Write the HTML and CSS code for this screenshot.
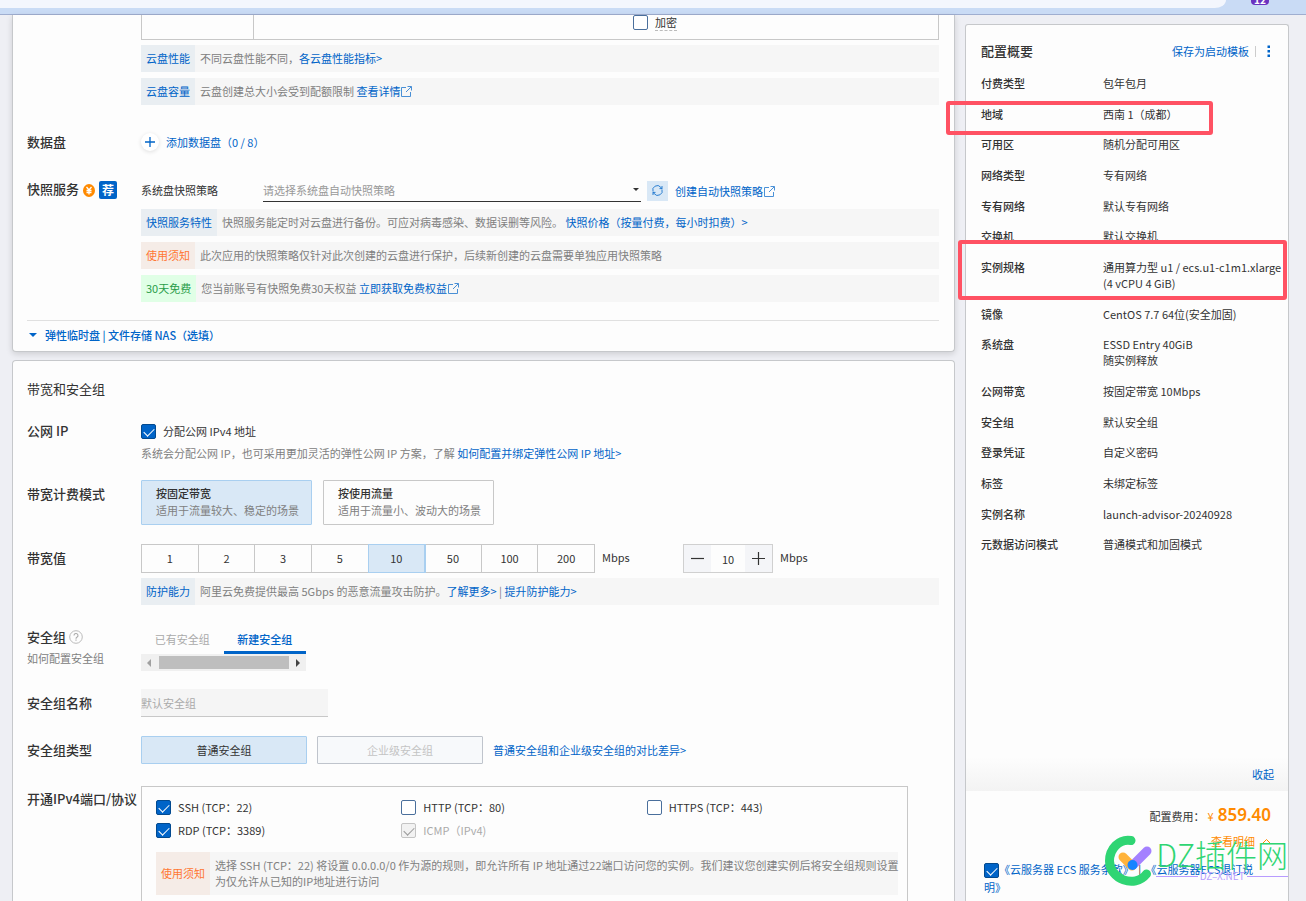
FILE: index.html
```html
<!DOCTYPE html>
<html lang="zh-CN">
<head>
<meta charset="utf-8">
<title>云服务器 ECS 购买</title>
<link rel="stylesheet" href="styles.css">
</head>
<body>
<svg class="defs" aria-hidden="true">
  <symbol id="ext" viewBox="0 0 11 11"><path d="M5 1.500H.5v9h9V6M6.500.5h4v4M10.300.7 5 6" fill="none" stroke="currentColor"/></symbol>
</svg>
<div class="page">
  <header class="browser">
    <div class="browser-bar"></div>
    <div class="browser-badge">12</div>
  </header>
  <div class="columns">
    <main class="main">
      <section class="card card-top">
        <div class="row">
          <div class="content">
            <div class="disk">
              <div class="disk-name"></div>
              <div class="disk-body">
                <input type="checkbox" class="check" id="encrypt"><label for="encrypt" class="dashed">加密</label>
              </div>
            </div>
            <div class="notices">
              <div class="notice"><span class="tag blue">云盘性能</span><p>不同云盘性能不同，<a href="#">各云盘性能指标&gt;</a></p></div>
              <div class="notice"><span class="tag blue">云盘容量</span><p>云盘创建总大小会受到配额限制 <a href="#">查看详情<svg class="ext"><use href="#ext"/></svg></a></p></div>
            </div>
          </div>
        </div>
        <div class="row row-data">
          <h3 class="label">数据盘</h3>
          <div class="content">
            <button class="add"><span class="add-icon"><svg width="12" height="12" viewBox="0 0 12 12"><path d="M6 1v10M1 6h10" stroke="currentColor" stroke-width="1.300"/></svg></span>添加数据盘（0 / 8）</button>
          </div>
        </div>
        <div class="row row-snap">
          <h3 class="label">快照服务
            <svg class="coin" width="12" height="13" viewBox="0 0 12 13"><ellipse cx="6" cy="6.500" rx="6" ry="6.500" fill="#ff8a00"/><path d="M3.500 3 6 6l2.500-3M6 6v4.500M3.500 6.500h5M3.500 8.500h5" fill="none" stroke="#fff" stroke-width="1.300"/></svg><span class="rec">荐</span></h3>
          <div class="content">
            <div class="snap">
              <label for="policy" class="snap-label">系统盘快照策略</label>
              <div class="select"><select id="policy"><option>请选择系统盘自动快照策略</option></select></div>
              <button class="refresh" aria-label="刷新"><svg width="13" height="13" viewBox="0 0 13 13"><path d="M2 7.500a4.500 4.500 0 0 1 7.800-4.200L11 4.500M11 5.500a4.500 4.500 0 0 1-7.800 4.200L2 8.500M11 2v2.600H8.500M2 11V8.400h2.500" fill="none" stroke="currentColor" stroke-width=".8"/></svg></button>
              <a href="#">创建自动快照策略<svg class="ext"><use href="#ext"/></svg></a>
            </div>
            <div class="notices">
              <div class="notice"><span class="tag blue">快照服务特性</span><p>快照服务能定时对云盘进行备份。可应对病毒感染、数据误删等风险。 <a href="#">快照价格（按量付费，每小时扣费）&gt;</a></p></div>
              <div class="notice"><span class="tag orange">使用须知</span><p>此次应用的快照策略仅针对此次创建的云盘进行保护，后续新创建的云盘需要单独应用快照策略</p></div>
              <div class="notice"><span class="tag green">30天免费</span><p>您当前账号有快照免费30天权益 <a href="#">立即获取免费权益<svg class="ext"><use href="#ext"/></svg></a></p></div>
            </div>
          </div>
        </div>
        <button class="more"><span class="tri"></span>弹性临时盘 | 文件存储 NAS（选填）</button>
      </section>

      <section class="card card-net">
        <h2 class="title">带宽和安全组</h2>
        <div class="row">
          <h3 class="label">公网 IP</h3>
          <div class="content">
            <div class="line"><input type="checkbox" class="check" id="ip" checked><label for="ip">分配公网 IPv4 地址</label></div>
            <p class="hint">系统会分配公网 IP，也可采用更加灵活的弹性公网 IP 方案，了解 <a href="#">如何配置并绑定弹性公网 IP 地址&gt;</a></p>
          </div>
        </div>
        <div class="row row-mode">
          <h3 class="label">带宽计费模式</h3>
          <div class="content modes">
            <button class="mode on"><b>按固定带宽</b><span>适用于流量较大、稳定的场景</span></button>
            <button class="mode"><b>按使用流量</b><span>适用于流量小、波动大的场景</span></button>
          </div>
        </div>
        <div class="row row-bw">
          <h3 class="label">带宽值</h3>
          <div class="content">
            <div class="bw">
              <div class="segs">
                <button>1</button><button>2</button><button>3</button><button>5</button><button class="on">10</button><button>50</button><button>100</button><button>200</button>
              </div>
              <span class="unit">Mbps</span>
              <div class="stepper">
                <button aria-label="减少"><svg width="13" height="13" viewBox="0 0 13 13"><path d="M0 6.500h13" stroke="#333" stroke-width="1.200"/></svg></button>
                <input type="text" value="10" aria-label="带宽值">
                <button aria-label="增加"><svg width="13" height="13" viewBox="0 0 13 13"><path d="M0 6.500h13M6.500 0v13" stroke="#333" stroke-width="1.200"/></svg></button>
              </div>
              <span class="unit">Mbps</span>
            </div>
            <div class="notice"><span class="tag blue">防护能力</span><p>阿里云免费提供最高 5Gbps 的恶意流量攻击防护。<a href="#">了解更多&gt;</a> | <a href="#">提升防护能力&gt;</a></p></div>
          </div>
        </div>
        <div class="row row-group">
          <div class="label-box">
            <h3 class="label">安全组<svg class="help" width="14" height="14" viewBox="0 0 14 14"><circle cx="7" cy="7" r="6.300" fill="none" stroke="#bbb"/><path d="M5 5.600a2 2 0 1 1 2.900 1.700c-.700.400-.900.700-.900 1.400M7 9.600v1.200" fill="none" stroke="#aaa" stroke-width="1.100"/></svg></h3>
            <a href="#" class="sub">如何配置安全组</a>
          </div>
          <div class="content">
            <div class="tabs"><button>已有安全组</button><button class="on">新建安全组</button></div>
            <div class="scroll"><i class="left"></i><div class="thumb"></div><i class="right"></i></div>
          </div>
        </div>
        <div class="row row-name">
          <h3 class="label"><label for="gname">安全组名称</label></h3>
          <div class="content"><input id="gname" class="name" type="text" value="默认安全组" disabled></div>
        </div>
        <div class="row row-type">
          <h3 class="label">安全组类型</h3>
          <div class="content types">
            <button class="type on">普通安全组</button>
            <button class="type" disabled>企业级安全组</button>
            <a href="#">普通安全组和企业级安全组的对比差异&gt;</a>
          </div>
        </div>
        <div class="row row-ports">
          <h3 class="label">开通IPv4端口/协议</h3>
          <div class="ports">
            <div class="port-grid">
              <div class="line"><input type="checkbox" class="check" id="p1" checked><label for="p1">SSH (TCP：22)</label></div>
              <div class="line"><input type="checkbox" class="check" id="p2"><label for="p2">HTTP (TCP：80)</label></div>
              <div class="line"><input type="checkbox" class="check" id="p3"><label for="p3">HTTPS (TCP：443)</label></div>
              <div class="line"><input type="checkbox" class="check" id="p4" checked><label for="p4">RDP (TCP：3389)</label></div>
              <div class="line"><input type="checkbox" class="check" id="p5" checked disabled><label for="p5">ICMP（IPv4)</label></div>
            </div>
            <div class="notice"><span class="tag orange">使用须知</span><p>选择 SSH (TCP：22) 将设置 0.0.0.0/0 作为源的规则，即允许所有 IP 地址通过22端口访问您的实例。我们建议您创建实例后将安全组规则设置<br>为仅允许从已知的IP地址进行访问</p></div>
          </div>
        </div>
      </section>
    </main>

    <aside class="side">
      <div class="side-head">
        <h2>配置概要</h2>
        <a href="#">保存为启动模板</a>
        <span class="bar"></span>
        <button class="dots" aria-label="更多"><svg width="4" height="13" viewBox="0 0 4 13"><path d="M.5.5h2.500v2.500H.5zM.5 5h2.500v2.500H.5zM.5 9.500h2.500V12H.5z" fill="#0064c8"/></svg></button>
      </div>
      <dl class="summary">
        <div><dt>付费类型</dt><dd>包年包月</dd></div>
        <div><dt>地域</dt><dd>西南 1（成都）</dd></div>
        <div><dt>可用区</dt><dd>随机分配可用区</dd></div>
        <div><dt>网络类型</dt><dd>专有网络</dd></div>
        <div><dt>专有网络</dt><dd>默认专有网络</dd></div>
        <div><dt>交换机</dt><dd>默认交换机</dd></div>
        <div><dt>实例规格</dt><dd>通用算力型 u1 / ecs.u1-c1m1.xlarge<br>(4 vCPU 4 GiB)</dd></div>
        <div><dt>镜像</dt><dd>CentOS 7.7 64位(安全加固)</dd></div>
        <div><dt>系统盘</dt><dd>ESSD Entry 40GiB<br>随实例释放</dd></div>
        <div><dt>公网带宽</dt><dd>按固定带宽 10Mbps</dd></div>
        <div><dt>安全组</dt><dd>默认安全组</dd></div>
        <div><dt>登录凭证</dt><dd>自定义密码</dd></div>
        <div><dt>标签</dt><dd>未绑定标签</dd></div>
        <div><dt>实例名称</dt><dd>launch-advisor-20240928</dd></div>
        <div><dt>元数据访问模式</dt><dd>普通模式和加固模式</dd></div>
      </dl>
      <div class="collapse"><a href="#">收起</a></div>
      <div class="pay">
        <div class="price"><span>配置费用：</span><span class="yen">¥</span><strong>859.40</strong></div>
        <a href="#" class="detail">查看明细<svg width="9" height="6" viewBox="0 0 9 6"><path d="M1 5l3.500-3.500L8 5" fill="none" stroke="currentColor"/></svg></a>
        <div class="agree"><input type="checkbox" class="check" id="agree" checked aria-label="同意服务条款"><a href="#">《云服务器 ECS 服务条款》</a> <span class="sep">|</span> <a href="#">《云服务器ECS退订说<br>明》</a></div>
      </div>
      <div class="mark mark-region"></div>
      <div class="mark mark-spec"></div>
      <div class="brand">
        <svg width="50" height="52" viewBox="0 0 50 52"><path d="M26 5.500C14 3.500 4.500 14 4.500 26c0 18 25 28 37 13" fill="none" stroke="#2fd573" stroke-width="9" stroke-linecap="round"/><path d="M18 22l9 9" stroke="#ffb33c" stroke-width="9" stroke-linecap="round"/><path d="M42 16 28 30" stroke="#a481ff" stroke-width="9" stroke-linecap="round"/><circle cx="27.500" cy="30" r="5" fill="#1684ff"/></svg>
        <div class="brand-text"><div class="brand-name">DZ插件网</div><div class="brand-url">DZ–X.NET</div></div>
      </div>
    </aside>
  </div>
</div>
</body>
</html>
```

FILE: styles.css
```css
* { box-sizing: border-box; }
body {
  margin: 0;
  background: #eeeff4;
  color: #333;
  font: 11px/16px "Noto Sans CJK SC", sans-serif;
}
h2, h3, p, dl, dd { margin: 0; }
button, input, select { font: inherit; color: inherit; margin: 0; padding: 0; border: 0; background: none; border-radius: 0; }
a { color: #0064c8; text-decoration: none; }
.defs { display: none; }
.ext { width: 11px; height: 11px; margin-left: 1px; vertical-align: -1px; opacity: .7; }

.page { min-height: 100vh; display: flex; flex-direction: column; overflow: hidden; }
.browser { display: flex; align-items: flex-start; height: 15px; background: #c9dbf5; border-bottom: 1px solid #9faed0; overflow: hidden; }
.browser-bar { flex: 1; height: 8px; background: #f3f6fd; border-bottom-right-radius: 20px 14px; }
.browser-badge { width: 18px; height: 5px; margin: 0 37px 0 25px; border-radius: 0 0 4px 4px; background: #6a32c0; color: #fff; font-size: 10px; font-weight: 700; line-height: 0; text-align: center; overflow: hidden; }

.columns { flex: 1; display: flex; gap: 10px; padding: 0 17px 0 12px; }
.main { flex: 1; min-width: 0; display: flex; flex-direction: column; gap: 8px; }
.card { background: #fdfdfd; border: 1px solid #c6c8cb; padding: 0 15px 0 14px; }
.card-top { border-top: 0; border-radius: 0 0 4px 4px; box-shadow: 0 2px 6px rgba(0, 0, 0, .14); }
.card-net { flex: 1; display: flex; flex-direction: column; border-bottom: 0; border-radius: 4px 4px 0 0; padding-top: 19px; }
.row { display: flex; }
.label, .label-box { width: 114px; flex: none; }
.label { font-size: 13px; line-height: 20px; font-weight: 500; white-space: nowrap; }
.content { flex: 1; min-width: 0; }
.row:first-child .content { margin-left: 114px; }

.disk { display: flex; height: 25px; border: 1px solid #c8c8c8; border-top: 0; }
.disk-name { width: 112px; border-right: 1px solid #c8c8c8; }
.disk-body { flex: 1; display: flex; align-items: flex-start; justify-content: center; gap: 7px; padding-left: 118px; }
.dashed { border-bottom: 1px dashed #bbb; line-height: 15px; }

.check { appearance: none; flex: none; width: 15px; height: 15px; border: 1px solid #4a6f9c; border-radius: 2px; background: #fff; vertical-align: middle; }
.check:checked { background: #0064c8; border-color: #034a8f; }
.check:checked::before { content: ""; display: block; width: 9px; height: 5px; margin: 3px 2px; border: solid #fff; border-width: 0 0 1px 1px; transform: rotate(-45deg); }
.check:disabled { background: #f2f2f2; border-color: #c4c4c4; }
.check:disabled::before { border-color: #999; }
.check:disabled + label { color: #aaa; }
.line { display: flex; align-items: center; gap: 7px; }

.notices { display: grid; gap: 6px; margin-top: 5px; }
.notice { display: flex; min-height: 27px; background: #f6f6f6; color: #808080; }
.notice p { padding: 5px 0 6px 5px; white-space: nowrap; }
.tag { display: flex; align-items: center; padding: 0 5px 1px; white-space: nowrap; }
.blue { background: #e9eef2; color: #0064c8; }
.orange { background: #f5ece7; color: #ff7733; }
.green { background: #e0ffe6; color: #2a9d4a; }

.row-data { margin-top: 27px; align-items: center; }
.add { display: flex; align-items: center; gap: 7px; color: #0064c8; }
.add-icon { display: grid; place-items: center; width: 18px; height: 18px; border-radius: 50%; background: #fff; box-shadow: 0 1px 4px rgba(0, 0, 0, .12); }
.row-snap { margin-top: 27px; }
.coin { margin-left: 1px; vertical-align: -3px; }
.rec { display: inline-block; width: 18px; height: 18px; margin-left: 4px; border-radius: 2px; background: #0064c8; color: #fff; font-size: 12px; font-weight: 700; line-height: 18px; text-align: center; vertical-align: -1px; }
.snap { display: flex; align-items: center; height: 23px; }
.snap-label { width: 122px; padding-bottom: 2px; }
.select { width: 378px; position: relative; border-bottom: 1px solid #333; color: #999; }
.select select { width: 100%; height: 22px; appearance: none; }
.select::after { content: ""; position: absolute; right: 2px; top: 9px; border: 3px solid transparent; border-top-color: #333; }
.refresh { display: grid; place-items: center; width: 21px; height: 20px; margin: 0 7px 0 6px; background: #d9e8f6; color: #0064c8; }
.row-snap .notices { margin-top: 7px; }
.more { display: flex; align-items: center; width: 100%; height: 28px; margin: 18px 0 3px; border-top: 1px solid #e0e0e0; color: #0064c8; font-weight: 500; }
.tri { margin: 0 8px 0 2px; border: 4px solid transparent; border-top-color: #0064c8; border-bottom-width: 0; }

.title { font-size: 13px; line-height: 18px; font-weight: 400; margin-bottom: 23px; }
.title + .row .line { height: 20px; }
.hint { margin-top: 4px; color: #808080; }
.row-mode { margin-top: 19px; }
.row-mode .label, .row-bw .label { margin-top: 4px; }
.modes { display: flex; gap: 11px; }
.mode { display: flex; flex-direction: column; justify-content: center; align-items: flex-start; width: 171px; height: 45px; padding: 0 0 2px 14px; border: 1px solid #c8c8c8; line-height: 17px; border-radius: 1px; white-space: nowrap; }
.mode b { font-weight: 500; }
.mode span { color: #808080; }
.on { background: #d9e8f6; }
.mode.on { border-color: #a9cff0; }
.row-bw { margin-top: 19px; }
.bw { display: flex; align-items: center; margin-bottom: 5px; }
.segs { display: flex; width: 454px; height: 29px; border: solid #c8c8c8; border-width: 1px 0 1px 1px; }
.segs button { flex: 1; padding-bottom: 2px; border-right: 1px solid #c8c8c8; }
.segs .on { box-shadow: 0 0 0 1px #a9cff0; border-color: #a9cff0; }
.unit { width: 27px; margin-left: 7px; padding-bottom: 3px; }
.stepper { display: flex; width: 90px; height: 29px; margin-left: 54px; border: 1px solid #d0d0d0; }
.stepper button { display: grid; place-items: center; width: 27px; background: #f4f5f8; }
.stepper input { flex: 1; min-width: 0; text-align: center; }

.row-group { margin-top: 21px; }
.help { margin-left: 3px; vertical-align: -2px; }
.label-box .label { line-height: 22px; }
.sub { color: #808080; line-height: 20px; }
.tabs { display: flex; width: 165px; height: 28px; }
.tabs button { flex: 1; padding-bottom: 2px; color: #aaa; }
.tabs .on { background: none; color: #0064c8; font-weight: 500; border-bottom: 3px solid #0064c8; padding-bottom: 0; }
.scroll { display: flex; align-items: center; justify-content: space-between; width: 165px; height: 17px; padding: 0 6px; background: #f0f0f0; }
.scroll i { border: 4px solid transparent; }
.scroll .left { border-right-color: #a0a0a0; border-left-width: 0; }
.scroll .right { border-left-color: #444; border-right-width: 0; }
.thumb { width: 130px; height: 13px; background: #bebebe; }
.row-name { margin-top: 18px; align-items: center; }
.name { display: block; width: 187px; height: 28px; background: #f5f5f5; border-bottom: 1px solid #c8c8c8; color: #aaa; }
.row-type { margin-top: 19px; align-items: center; }
.types { display: flex; align-items: center; gap: 10px; }
.type { width: 166px; height: 28px; border: 1px solid #bfc4cc; border-radius: 1px; background: #f7f9fb; }
.type.on { background: #d9e8f6; border-color: #a9cff0; }
.type:disabled { color: #c4c4c4; }
.row-ports { flex: 1; margin-top: 22px; }
.row-ports .label { margin-top: 3px; }
.ports { width: 767px; border: 1px solid #c8c8c8; border-bottom: 0; padding: 12px 9px 0 14px; }
.port-grid { display: grid; grid-template-columns: 1fr 1fr 1fr; row-gap: 7px; margin: 0 6px 14px 0; }

.side { position: relative; width: 324px; flex: none; display: flex; flex-direction: column; margin-top: 9px; border: 1px solid #c6c8cb; border-bottom: 0; border-radius: 3px 3px 0 0; background: #fdfdfd; }
.side-head { display: flex; align-items: center; padding: 16px 17px 14px 15px; }
.side-head h2 { flex: 1; font-size: 13px; line-height: 20px; font-weight: 500; }
.bar { width: 1px; height: 11px; margin: 0 11px 0 6px; background: #ccc; }
.dots { display: grid; }
.summary { padding-left: 15px; }
.summary div { display: flex; padding-bottom: 15px; }
.summary div:nth-child(3n + 2) { padding-bottom: 14px; }
.summary dt { width: 122px; flex: none; font-weight: 500; }
.summary dd { white-space: nowrap; }
.collapse { margin-top: auto; padding: 9px 14px 9px; text-align: right; background: linear-gradient(#fdfdfd, #f3f3f3); }
.pay { height: 110px; padding: 12px 17px 0 18px; text-align: right; }
.price { display: flex; justify-content: flex-end; align-items: baseline; line-height: 24px; }
.yen { margin: 0 4px 0 3px; color: #ff8a00; }
.price strong { font: 600 17px/24px "Noto Sans", sans-serif; color: #ff8a00; }
.detail { display: block; margin-top: 5px; color: #ff8a00; }
.detail svg { margin: 0 0 2px 7px; }
.agree { margin-top: 11px; line-height: 18px; text-align: left; white-space: nowrap; }
.agree .check { vertical-align: -4px; }
.sep { margin: 0 2px; }

.mark { position: absolute; border: 4px solid #ff5263; border-radius: 3px; }
.mark-region { left: -20px; top: 76px; width: 267px; height: 34px; }
.mark-spec { left: -8px; top: 215px; width: 329px; height: 60px; }
.brand { position: absolute; right: 0; bottom: 14px; display: flex; gap: 1px; align-items: center; }
.brand-text { padding-bottom: 4px; }
.brand-name { color: #2fd573; font: 300 31px/34px "Noto Sans CJK SC", sans-serif; white-space: nowrap; }
.brand-url { display: flex; align-items: center; gap: 2px; color: #b89cff; font-size: 10px; line-height: 10px; }
.brand-url::before, .brand-url::after { content: ""; flex: 1; height: 1px; background: #b89cff; }
```
